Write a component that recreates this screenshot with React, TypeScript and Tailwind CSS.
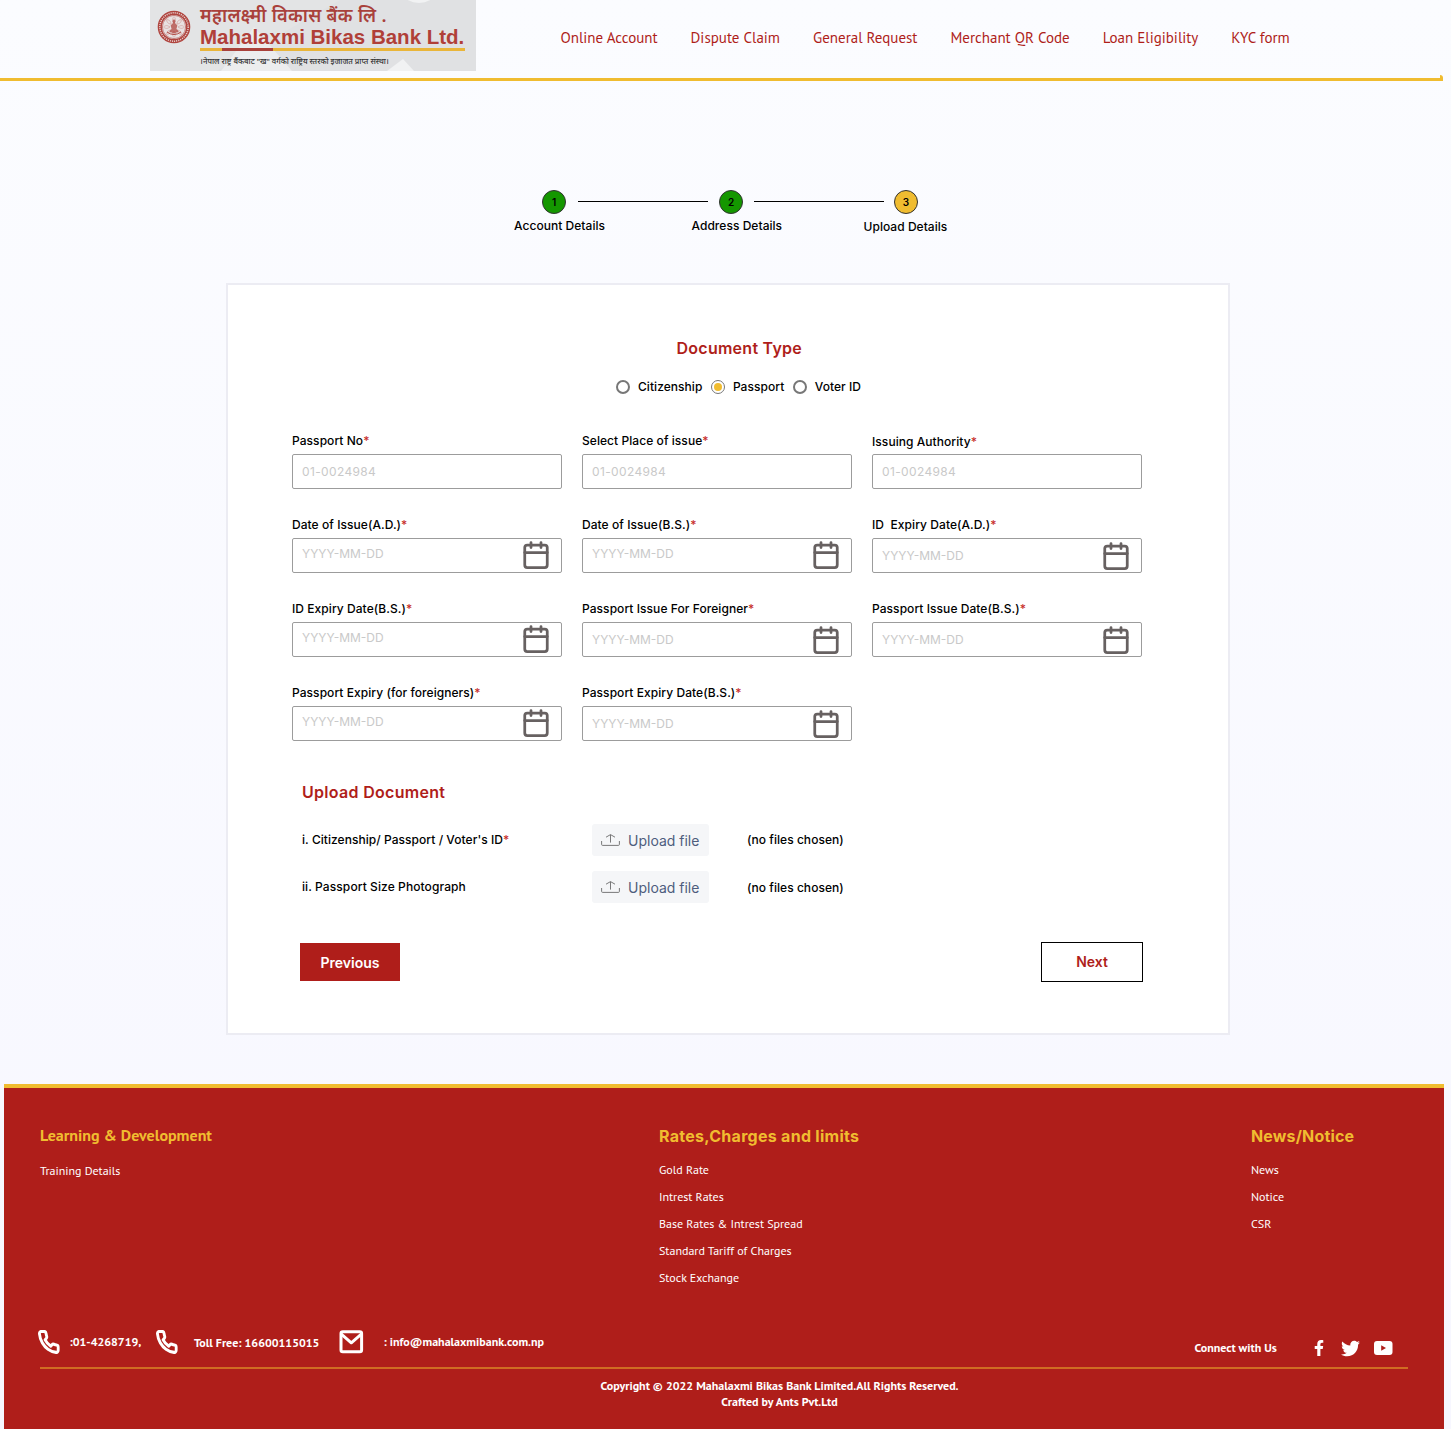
import { FaFacebookF, FaTwitter } from "react-icons/fa";

const NAV = ["Online Account", "Dispute Claim", "General Request", "Merchant QR Code", "Loan Eligibility", "KYC form"];

function Seal() {
  const petals = [0, 45, 90, 135, 180, 225, 270, 315];
  return (
    <svg className="mt-[10px] h-[34px] w-[34px] shrink-0" viewBox="0 0 34 34" fill="none">
      <circle cx="17" cy="17" r="14.2" stroke="#b0453f" strokeWidth="4.2" />
      <circle cx="17" cy="17" r="14.2" stroke="#e6d3d2" strokeWidth="1.5" strokeDasharray="1.1 1" />
      <circle cx="17" cy="17" r="11.6" fill="#e8e2e2" stroke="#b0453f" strokeWidth="0.6" />
      {petals.map((a) => (
        <path key={a} d="M17 13 C14.8 10 15.6 8 17 6.6 C18.4 8 19.2 10 17 13Z" transform={`rotate(${a} 17 17)`} stroke="#c98a86" strokeWidth="0.5" />
      ))}
      <path d="M17 9 L18.6 11 L18 13 L20.4 15.5 L19.4 19 L22 21.6 L17 23.4 L12 21.6 L14.6 19 L13.6 15.5 L16 13 L15.4 11Z" fill="#b0453f" fillOpacity="0.75" />
      <path d="M10 22 Q17 27 24 22" stroke="#b0453f" strokeWidth="1" />
    </svg>
  );
}

function Logo() {
  return (
    <div className="relative ml-[150px] flex h-[71px] w-[326px] shrink-0 overflow-hidden bg-[#e0e1e3] pl-[7px]">
      <svg className="absolute inset-0 h-full w-full" viewBox="0 0 326 71">
        <path d="M0 0H190L66 71H0Z" fill="#e3e4e5" />
        <path d="M71 71L104 27L142 71Z" fill="#ecedee" />
        <path d="M237 71L253 59L264 71Z" fill="#f1f2f3" />
        <ellipse cx="269" cy="-6" rx="15" ry="9" fill="#f1f2f3" />
      </svg>
      <div className="relative flex">
        <Seal />
        <div className="ml-[9px] w-[267px] whitespace-nowrap">
          <p className="mt-[4px] h-[22px] font-['Noto_Sans',sans-serif] text-[18.3px] leading-[22px] font-semibold tracking-[0.3px] text-[#a9413b]">महालक्ष्मी विकास बैंक लि .</p>
          <p className="h-[22px] font-['Liberation_Sans',sans-serif] text-[20.5px] leading-[22px] font-bold text-[#b03f38]">Mahalaxmi Bikas Bank Ltd.</p>
          <div className="flex h-[3px] w-[265px] bg-[#e9b53a] pl-[22px]">
            <span className="h-full w-[51px] bg-[#a9413b]" />
          </div>
          <p className="mt-[4px] font-['Noto_Sans',sans-serif] text-[7.75px] leading-[13px] font-medium text-[#333]">।नेपाल राष्ट्र बैंकबाट "ख" वर्गको राष्ट्रिय स्तरको इजाजत प्राप्त संस्था।</p>
        </div>
      </div>
    </div>
  );
}

function Header() {
  return (
    <header className="relative flex h-[81px] w-[1443px] border-b-[3px] border-[#f0bc30]">
      <Logo />
      <nav className="ml-[84.5px] flex h-[76px] items-center gap-[33px] font-['PT_Sans','Noto_Sans',sans-serif] text-[15px] whitespace-nowrap text-[#af1e1a]">
        {NAV.map((n) => (
          <a key={n}>{n}</a>
        ))}
      </nav>
      <span className="absolute right-0 -bottom-[3px] h-[6px] w-[3px] rounded-r-[3px] bg-[#f0bc30]" />
    </header>
  );
}

function Step({ n, color }: { n: number; color: string }) {
  return (
    <span className={`flex h-6 w-6 items-center justify-center rounded-full border border-[#333] text-[10px] font-semibold ${color}`}>{n}</span>
  );
}

function Stepper() {
  return (
    <div className="mt-[109px]">
      <div className="flex items-center pl-[542px]">
        <Step n={1} color="bg-[#149700]" />
        <span className="-mt-px mr-[11px] ml-3 h-px w-[130px] bg-black" />
        <Step n={2} color="bg-[#149700]" />
        <span className="-mt-px mr-[10px] ml-[11px] h-px w-[130px] bg-black" />
        <Step n={3} color="bg-[#f0bc30]" />
      </div>
      <div className="mt-[3px] flex h-[18px] pl-[514px] text-[12px] leading-[18px] font-medium tracking-[0.04px] whitespace-nowrap">
        <span className="w-[177.5px]">Account Details</span>
        <span className="w-[172px]">Address Details</span>
        <span className="pt-px">Upload Details</span>
      </div>
    </div>
  );
}

function Calendar() {
  return (
    <svg className="h-[30px] w-[30px]" viewBox="0 0 24 24" fill="none" stroke="#676161" strokeWidth="2.2" strokeLinecap="round" strokeLinejoin="round">
      <rect x="3" y="4" width="18" height="18" rx="2" />
      <path d="M16 2v4M8 2v4M3 10h18" />
    </svg>
  );
}

type FieldData = { label: string; date?: boolean; raised?: boolean; lowLabel?: boolean };

const FIELDS: FieldData[] = [
  { label: "Passport No" },
  { label: "Select Place of issue" },
  { label: "Issuing Authority", lowLabel: true },
  { label: "Date of Issue(A.D.)", date: true, raised: true },
  { label: "Date of Issue(B.S.)", date: true, raised: true },
  { label: "ID  Expiry Date(A.D.)", date: true },
  { label: "ID Expiry Date(B.S.)", date: true, raised: true },
  { label: "Passport Issue For Foreigner", date: true },
  { label: "Passport Issue Date(B.S.)", date: true },
  { label: "Passport Expiry (for foreigners)", date: true, raised: true },
  { label: "Passport Expiry Date(B.S.)", date: true },
];

function Field({ label, date, raised, lowLabel }: FieldData) {
  return (
    <div className="h-[57px]">
      <label className={`block h-[22px] text-[12px] leading-[18px] font-medium tracking-[0.06px] whitespace-pre ${lowLabel ? "pt-px" : ""}`}>
        {label}
        <span className="text-[#c8302b]">*</span>
      </label>
      <div className="flex h-[35px] justify-between rounded-[2px] border border-[#9c9c9c] pr-[10px] pl-[9px] text-[12px] text-[#c9c9c9]">
        <span className={date ? (raised ? "leading-[29px]" : "leading-[33px]") : "leading-[33px] tracking-[0.36px]"}>{date ? "YYYY-MM-DD" : "01-0024984"}</span>
        {date && (
          <span className={raised ? "pt-[0.5px]" : "pt-[1.5px]"}>
            <Calendar />
          </span>
        )}
      </div>
    </div>
  );
}

function Radio({ label, on }: { label: string; on?: boolean }) {
  return (
    <label className="flex items-center gap-2">
      <span className={`flex h-[14px] w-[14px] items-center justify-center rounded-full bg-white ${on ? "border border-[#777]" : "border-2 border-[#777]"}`}>
        {on && <span className="h-2 w-2 rounded-full bg-[#f0bc30]" />}
      </span>
      {label}
    </label>
  );
}

function UploadButton() {
  return (
    <button className="flex h-8 w-[117px] items-center rounded-[3px] bg-[#f5f6f8] pl-[9px] text-[14px] font-normal text-[#4e5d7d]">
      <svg className="mr-2 h-[14px] w-[19px]" viewBox="0 0 19 14" fill="none" stroke="#6b6b6b" strokeWidth="0.9">
        <path d="M0.6 8v3.4q0 1 1 1h15.8q1 0 1-1V8M9.5 9.6V1.8M5 4.2L9.5 1.6L14 4.2" />
      </svg>
      Upload file
    </button>
  );
}

function FormCard() {
  return (
    <main className="mt-[48px] ml-[226px] h-[752px] w-[1004px] border-2 border-[#ececf3] bg-white">
      <h2 className="mt-[51px] ml-[448.5px] text-[16px] leading-[24px] font-semibold tracking-[0.26px] text-[#af1e1a]">Document Type</h2>
      <div className="mt-[18px] ml-[388px] flex h-[18px] gap-[8.5px] text-[12px] font-medium tracking-[0.05px]">
        <Radio label="Citizenship" />
        <Radio label="Passport" on />
        <Radio label="Voter ID" />
      </div>
      <div className="mt-[36px] ml-[64px] grid w-[850px] grid-cols-3 gap-x-5 gap-y-[27px]">
        {FIELDS.map((f) => (
          <Field key={f.label} {...f} />
        ))}
      </div>
      <section className="mt-[39px] ml-[74px]">
        <h2 className="text-[16px] leading-[24px] font-semibold tracking-[0.3px] text-[#af1e1a]">Upload Document</h2>
        <div className="mt-[20px] flex h-8 text-[12px] font-medium">
          <p className="w-[290px] leading-[32px] tracking-[0.05px]">
            i. Citizenship/ Passport / Voter's ID<span className="text-[#c8302b]">*</span>
          </p>
          <UploadButton />
          <p className="ml-[38px] leading-[32px] tracking-[0.04px]">(no files chosen)</p>
        </div>
        <div className="mt-[15px] flex h-8 text-[12px] font-medium">
          <p className="w-[290px] leading-[32px] tracking-[0.09px]">ii. Passport Size Photograph</p>
          <UploadButton />
          <p className="ml-[38px] leading-[34px] tracking-[0.04px]">(no files chosen)</p>
        </div>
      </section>
      <div className="mt-[39px] flex items-center justify-between pr-[85px] pl-[72px] text-[14px] font-semibold">
        <button className="h-[38px] w-[100px] bg-[#af1e1a] text-white">Previous</button>
        <button className="h-10 w-[102px] border border-black bg-white pb-px text-[#af1e1a]">Next</button>
      </div>
    </main>
  );
}

function Phone() {
  return (
    <svg className="h-[24px] w-[21.5px]" viewBox="0.6 0.6 22.8 22.8" preserveAspectRatio="none" fill="none" stroke="white" strokeWidth="3" strokeLinecap="round" strokeLinejoin="round">
      <path d="M22 16.92v3a2 2 0 0 1-2.18 2 19.79 19.79 0 0 1-8.63-3.07 19.5 19.5 0 0 1-6-6 19.79 19.79 0 0 1-3.07-8.67A2 2 0 0 1 4.11 2h3a2 2 0 0 1 2 1.72c.127.96.361 1.903.7 2.81a2 2 0 0 1-.45 2.11L8.09 9.91a16 16 0 0 0 6 6l1.27-1.27a2 2 0 0 1 2.11-.45c.907.339 1.85.573 2.81.7A2 2 0 0 1 22 16.92z" />
    </svg>
  );
}

function FooterLinks({ items }: { items: string[] }) {
  return (
    <ul className="mt-[8px] font-['PT_Sans','Noto_Sans',sans-serif] text-[12px] leading-[27px]">
      {items.map((i) => (
        <li key={i}>{i}</li>
      ))}
    </ul>
  );
}

function Footer() {
  return (
    <footer className="mt-[49px] ml-1 h-[345px] w-[1440px] border-t-4 border-[#f0bc30] bg-[#af1e1a] whitespace-nowrap text-white">
      <div className="flex h-[229px] pt-[36px] pl-9">
        <div className="w-[619px]">
          <h3 className="-mt-px h-[26px] font-['PT_Sans','Noto_Sans',sans-serif] text-[16px] leading-6 font-bold text-[#f0bc30]">Learning &amp; Development</h3>
          <FooterLinks items={["Training Details"]} />
        </div>
        <div className="w-[592px]">
          <h3 className="h-6 text-[16px] leading-6 font-bold tracking-[0.28px] text-[#f0bc30]">Rates,Charges and limits</h3>
          <FooterLinks items={["Gold Rate", "Intrest Rates", "Base Rates & Intrest Spread", "Standard Tariff of Charges", "Stock Exchange"]} />
        </div>
        <div>
          <h3 className="h-6 text-[16px] leading-6 font-bold tracking-[0.16px] text-[#f0bc30]">News/Notice</h3>
          <FooterLinks items={["News", "Notice", "CSR"]} />
        </div>
      </div>
      <div className="flex h-[50px] items-start pl-[34px] font-['PT_Sans','Noto_Sans',sans-serif] text-[12px] leading-[18px] font-bold">
        <span className="mt-[13px] w-[31.5px]"><Phone /></span>
        <span className="mt-4 w-[86.5px]">:01-4268719,</span>
        <span className="mt-[13px] w-[38px]"><Phone /></span>
        <span className="mt-[17px] w-[144.5px]">Toll Free: 16600115015</span>
        <svg className="mt-[13px] mr-[20px] h-6 w-[25px]" viewBox="0 0 25 24" fill="none" stroke="white" strokeWidth="3" strokeLinecap="round" strokeLinejoin="round">
          <rect x="2" y="1.8" width="20.6" height="20" rx="1.8" />
          <path d="M2.6 4.4L12.3 12.8L22 4.4" />
        </svg>
        <span className="mt-4 w-[811px]">: info@mahalaxmibank.com.np</span>
        <span className="mt-[22px] w-[119.5px]">Connect with Us</span>
        <span className="mt-[23px] w-[26.5px]">
          <FaFacebookF className="h-[16px] w-[10px]" />
        </span>
        <span className="mt-[22px] w-[33.5px]">
          <FaTwitter className="h-[19px] w-[19px]" />
        </span>
        <svg className="mt-6 h-[14px] w-[18.5px]" viewBox="0 0 18.5 14">
          <rect width="18.5" height="14" rx="3" fill="white" />
          <path d="M7.2 4.2V9.8L12 7Z" fill="#af1e1a" />
        </svg>
      </div>
      <div className="ml-9 h-0.5 w-[1368px] bg-[#d06c22]" />
      <div className="mt-[9px] ml-[596px] w-[359px] text-center font-['PT_Sans','Noto_Sans',sans-serif] text-[12px] leading-4 font-bold">
        <p>Copyright © 2022 Mahalaxmi Bikas Bank Limited.All Rights Reserved.</p>
        <p>Crafted by Ants Pvt.Ltd</p>
      </div>
    </footer>
  );
}

export default function App() {
  return (
    <div className="h-[1429px] w-[1451px] overflow-hidden bg-gradient-to-b from-[#fbfcff] to-[#f7f7ff] font-['Inter',sans-serif] text-black">
      <Header />
      <Stepper />
      <FormCard />
      <Footer />
    </div>
  );
}
